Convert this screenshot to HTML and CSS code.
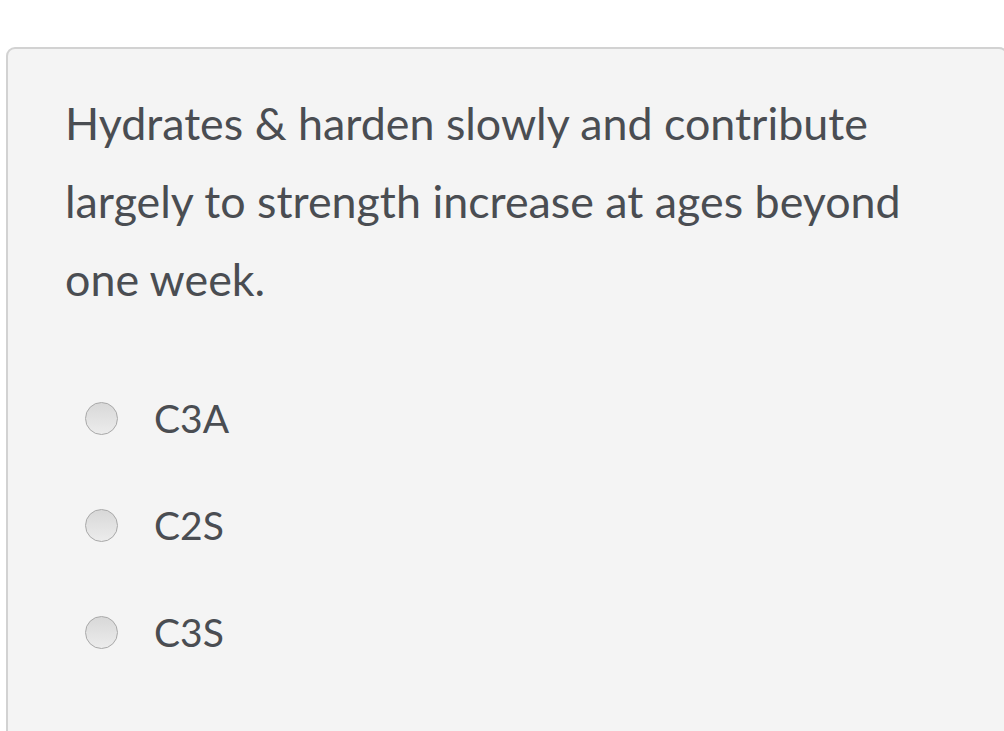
FILE: index.html
```html
<!DOCTYPE html>
<html>
<head>
<meta charset="utf-8">
<link rel="stylesheet" href="styles.css">
</head>
<body>
<div class="card">
  <p class="question">Hydrates &amp; harden slowly and contribute largely to strength increase at ages beyond one week.</p>
  <ul class="options">
    <li class="option"><span class="radio"></span><span class="label">C3A</span></li>
    <li class="option"><span class="radio"></span><span class="label">C2S</span></li>
    <li class="option"><span class="radio"></span><span class="label">C3S</span></li>
  </ul>
</div>
</body>
</html>
```
FILE: styles.css
```css
html, body {
  margin: 0;
  padding: 0;
  background: #fff;
  overflow: hidden;
  width: 1004px;
  height: 731px;
}
body {
  box-sizing: border-box;
  padding-top: 47px;
  padding-left: 6px;
  font-family: "Lato", "Liberation Sans", sans-serif;
  color: #4a4d52;
}
.card {
  width: 1002px;
  flex-shrink: 0;
  height: 684px;
  box-sizing: border-box;
  background: #f4f4f4;
  border: 2px solid #d2d2d2;
  border-bottom: none;
  border-radius: 9px 9px 0 0;
  padding: 35px 0 0 57px;
}
.question {
  margin: 0;
  font-size: 44.8px;
  line-height: 78px;
  max-width: 880px;
}
.options {
  list-style: none;
  margin: 64px 0 0 0;
  padding: 0 0 0 20px;
  display: flex;
  flex-direction: column;
  gap: 35px;
}
.option {
  display: flex;
  align-items: center;
  height: 72px;
}
.radio {
  width: 33px;
  height: 33px;
  border-radius: 50%;
  box-sizing: border-box;
  border: 1.5px solid #a8a8a8;
  background: linear-gradient(#d8d8d8, #ececec);
  margin-right: 36px;
}
.label {
  font-size: 39px;
}
```
